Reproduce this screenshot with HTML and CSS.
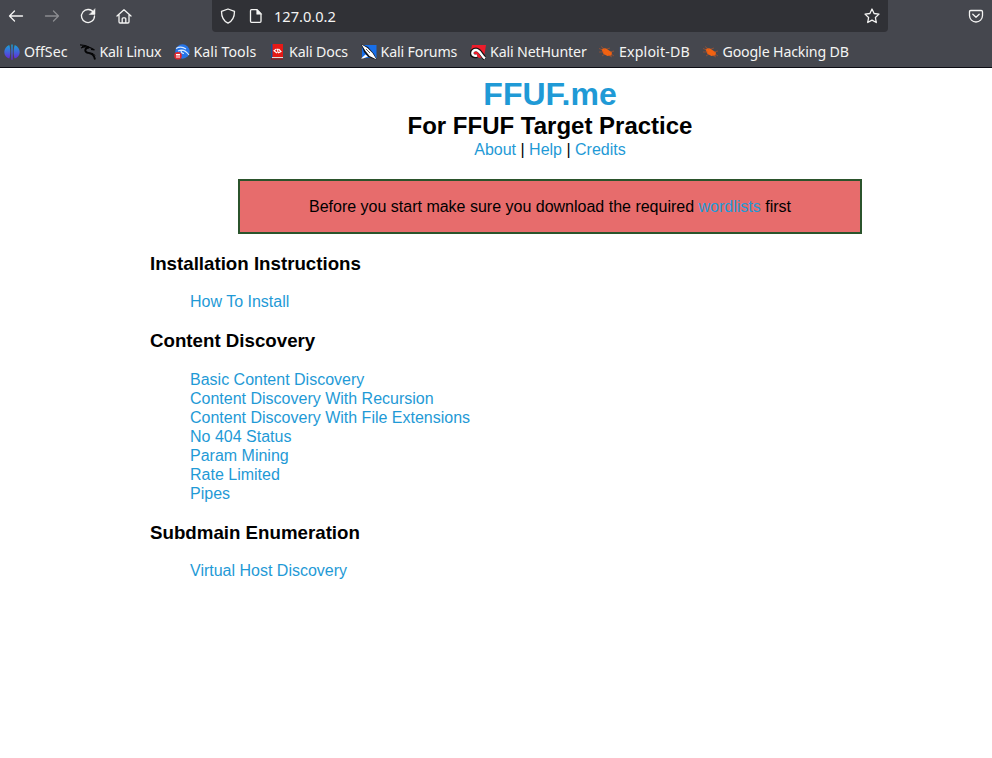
FILE: index.html
```html
<!DOCTYPE html>
<html lang="en">
<head>
<meta charset="utf-8">
<title>FFUF.me</title>
<link rel="stylesheet" href="styles.css">
</head>
<body>
<header class="browser">
  <div class="toolbar">
    <svg class="icon back" viewBox="0 0 16 16"><path d="M14.500 8H1.500M6.500 3l-5 5 5 5"/></svg>
    <svg class="icon forward" viewBox="0 0 16 16"><path d="M1.500 8h13M9.500 3l5 5-5 5"/></svg>
    <svg class="icon reload" viewBox="0 0 16 16"><path d="M13.600 4.700A6.500 6.500 0 1 0 14.500 8"/><path class="solid" d="M15 1v5.500H9.500z"/></svg>
    <svg class="icon home" viewBox="0 0 16 16"><path d="m1 8 7-6.300L15 8M3 6.700v7.100q0 1.200 1.200 1.200h7.600q1.200 0 1.200-1.200V6.700M6.200 14.800v-4q0-1 1-1h1.600q1 0 1 1v4"/></svg>
    <div class="address">
      <svg class="icon" viewBox="0 0 16 16"><path d="M8 1 14.500 3.400C14.500 9 12.600 12.800 8 15.200 3.400 12.800 1.500 9 1.500 3.400z"/></svg>
      <svg class="icon page" viewBox="0 0 16 16"><path d="M3.500 1.700H9l4 4v7.600q0 1-1 1H3.500q-1 0-1-1V2.700q0-1 1-1z"/><path class="solid" d="M8.700 1.500v4.800h4.600z"/></svg>
      <span class="url">127.0.0.2</span>
      <svg class="icon star" viewBox="0 0 16 16"><path d="m8 1 2.100 4.500 4.900.6-3.600 3.400.9 5-4.300-2.400-4.300 2.400.9-5L1 6.100l4.900-.6z"/></svg>
    </div>
    <svg class="icon pocket" viewBox="0 0 16 16"><path d="M2.800 2.500h10.400q1.300 0 1.300 1.300v3.700a6.500 6.500 0 0 1-13 0V3.800q0-1.300 1.300-1.300zM4.800 6.200 8 9.200l3.200-3"/></svg>
  </div>
  <nav class="bookmarks">
    <a class="bookmark offsec"><svg viewBox="0 0 16 16"><defs><linearGradient id="os" x2="0" y2="1"><stop stop-color="#16a6d6"/><stop offset=".5" stop-color="#4263dc"/><stop offset="1" stop-color="#6b20d8"/></linearGradient></defs><path fill="url(#os)" d="M5.200.9C6.600 4 6.700 12 5.200 14.500 2 13.400.3 11 .3 8S2 2.200 5.200.9zM10.800.9c-1.400 3.100-1.500 11.100 0 13.600 3.200-1.100 4.900-3.500 4.900-6.500s-1.700-5.800-4.900-7.100zM7.300.5h1.400v15.200H7.300z"/></svg><span>OffSec</span></a>
    <a class="bookmark linux"><svg viewBox="0 0 16 16"><path fill="none" stroke="#050506" stroke-width="1.200" d="M0 .8 5 1.500l4 1.500M1 4l5-2 6 2.500 2.500 1.500-3.500-.5"/><path fill="none" stroke="#050506" stroke-width="1.900" d="M9 3.500C4.500 4 4.500 7.500 7 8.500c3.500 1 7 1 8 7"/><path fill="none" stroke="#050506" d="M2 2.500l6 1M9 9l4 .5 2 2"/></svg><span>Kali Linux</span></a>
    <a class="bookmark tools"><svg viewBox="0 0 16 16"><circle cx="8.500" cy="7.500" r="7.200" fill="#2574e8"/><path fill="none" stroke="#d9eaff" stroke-width="1.100" d="M2 4.500q5-3 10 .5M4 7q6-3 11 4M7 6.500q0 3 3 3"/><circle cx="4" cy="11.800" r="3.800" fill="#e3272e"/><path stroke="#fff" d="M2 10.500h4M3 10.500v3.500M5 10.500v3.500"/></svg><span>Kali Tools</span></a>
    <a class="bookmark docs"><svg viewBox="0 0 16 16"><path fill="#e51916" d="M3 0h11v13H3z"/><path fill="#174c91" d="M2 0h1.500v14H2z"/><path fill="#ddd" d="M3 13h11v1.500H3z"/><path fill="#8e1119" d="M2 14.200h12v1.300H2z"/><path fill="none" stroke="#fff" stroke-width="1.100" d="M7.500 5 5 6.700 8 9M8.500 4.800l.5 4M9.500 5l2.500 2.500-3 1.500"/></svg><span>Kali Docs</span></a>
    <a class="bookmark forums"><svg viewBox="0 0 16 16"><path fill="#176ee8" d="M1 1h14.500v13H1z"/><path fill="#101319" d="m0 0 7 3 6 7 3 6-9-3-4-5z"/><path fill="#fff" d="m.5.5 6 3.500 5 5 4 6.500-7-3.500-4-5zM0 14.500l4.500-4 2.500 2-5 2z"/><path stroke="#151920" stroke-width=".7" d="m5 5 4 4"/></svg><span>Kali Forums</span></a>
    <a class="bookmark hunter"><svg viewBox="0 0 16 16"><path fill="#ed1c2b" d="M2 1h14l-2 12-5 1-8-7z"/><path fill="none" stroke="#111" stroke-width="4" d="M7 12C0 14 0 5.500 6 5.500c4 0 6 5.500 9 9.500"/><path fill="none" stroke="#fff" stroke-width="2.400" d="M7 11.500C1 13 1 6 6 6c4 0 5 5.500 9 8.500"/></svg><span>Kali NetHunter</span></a>
    <a class="bookmark exploit"><svg viewBox="0 0 16 16"><path fill="#f26211" d="M2.500 5.500q3-2.500 6.500.2l4 2.800-.5 3-4 .5-4-2z"/><path fill="none" stroke="#b9562a" stroke-width=".6" d="M0 4.500 4 6M2 2.500l4 3M0 8h5M8 5l3-1M11 8l4-1M3 12l3-2M9 11l4 2M12 10l3 2"/></svg><span>Exploit-DB</span></a>
    <a class="bookmark google"><svg viewBox="0 0 16 16"><path fill="#f26211" d="M2.500 5.500q3-2.500 6.500.2l4 2.800-.5 3-4 .5-4-2z"/><path fill="none" stroke="#b9562a" stroke-width=".6" d="M0 4.500 4 6M2 2.500l4 3M0 8h5M8 5l3-1M11 8l4-1M3 12l3-2M9 11l4 2M12 10l3 2"/></svg><span>Google Hacking DB</span></a>
  </nav>
</header>
<main>
  <div class="heading">
    <h1><a>FFUF.me</a></h1>
    <h2>For FFUF Target Practice</h2>
    <div><a>About</a> | <a>Help</a> | <a>Credits</a></div>
  </div>
  <div class="notice">Before you start make sure you download the required <a>wordlists</a> first</div>
  <h3>Installation Instructions</h3>
  <ul><li><a>How To Install</a></li></ul>
  <h3>Content Discovery</h3>
  <ul class="discovery">
    <li><a>Basic Content Discovery</a></li>
    <li><a>Content Discovery With Recursion</a></li>
    <li><a>Content Discovery With File Extensions</a></li>
    <li><a>No 404 Status</a></li>
    <li><a>Param Mining</a></li>
    <li><a>Rate Limited</a></li>
    <li><a>Pipes</a></li>
  </ul>
  <h3>Subdmain Enumeration</h3>
  <ul><li><a>Virtual Host Discovery</a></li></ul>
</main>
</body>
</html>
```
FILE: styles.css
```css
* { box-sizing: border-box; }
body { margin: 0; background: #fff; color: #000; font: 16px/19px "Liberation Sans", Arial, sans-serif; overflow: hidden; }
.browser { height: 68px; background: #45474e; border-bottom: 1px solid #0d0d14; color: #f4f4f3; font-family: "Noto Sans", sans-serif; }
.toolbar { height: 36px; display: flex; align-items: flex-start; padding-left: 8px; }
.icon { width: 16px; height: 16px; flex: none; margin-top: 8px; fill: none; stroke: #f4f4f3; stroke-width: 1.3; stroke-linecap: round; stroke-linejoin: round; }
.solid { fill: #f4f4f3; stroke-width: .5; }
.forward { margin-left: 20px; opacity: .4; }
.reload { margin-left: 20px; }
.home { margin-left: 19.500px; }
.address { display: flex; width: 676px; height: 32px; margin-left: 80.500px; padding: 0 8px; background: #303136; border-radius: 0 0 4px 4px; }
.page { margin-left: 12px; }
.url { margin-left: 10px; font-size: 14.600px; line-height: 33px; }
.star { margin-left: auto; }
.pocket { margin-left: 80px; }
.bookmarks { display: flex; height: 31px; padding-left: 4px; font-size: 14.200px; letter-spacing: -.15px; }
.bookmark { display: flex; align-items: center; gap: 4px; flex: none; white-space: nowrap; }
.bookmark svg { width: 16px; height: 16px; flex: none; }
.bookmark span { line-height: 31px; }
.offsec { width: 75.500px; letter-spacing: 0; }
.linux { width: 94px; letter-spacing: -.2px; }
.tools { width: 95.500px; letter-spacing: .05px; }
.docs { width: 91.500px; }
.forums { width: 109.500px; }
.hunter { width: 129px; }
.exploit { width: 103.500px; letter-spacing: .15px; }
main { width: 800px; margin-left: 150px; padding-top: 8px; }
a { color: #1f9ad6; }
.bookmark { color: #f4f4f3; }
.heading { text-align: center; }
h1, h2, h3, ul { margin: 0; }
h1 { font-size: 32px; line-height: 37px; }
h2 { font-size: 24px; line-height: 25px; margin-bottom: 2px; }
.notice { width: 624px; height: 55px; margin: 20px auto 19px; border: 2px solid #2b542c; background: #e76c6c; text-align: center; line-height: 51px; }
h3 { font-size: 18.720px; line-height: 21px; margin-bottom: 18px; }
ul { padding-left: 40px; margin-bottom: 19px; list-style: none; }
.discovery { padding-top: 1px; }
li { height: 19px; }
```
